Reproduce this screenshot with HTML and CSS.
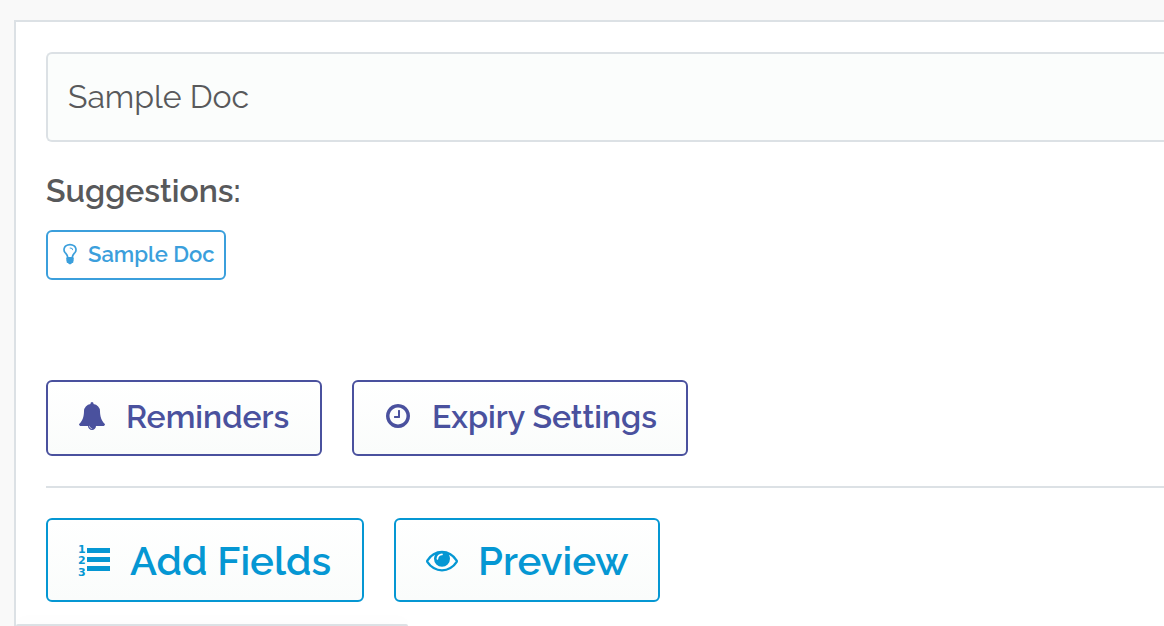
FILE: index.html
```html
<!DOCTYPE html>
<html lang="en">
	<head>
		<meta charset="UTF-8">
		<title>Sample Doc</title>
		<link rel="stylesheet" href="styles.css">
	</head>
	<body>
		<div class="panel">
			<input class="docname" type="text" value="Sample Doc" aria-label="Document name">
			<h2 class="subtitle">Suggestions:</h2>
			<div class="suggestions">
				<button type="button" class="btn btn-tip">
					<svg class="icon" viewBox="0 0 1792 1792" aria-hidden="true"><path d="M1120 576q0 13-9.5 22.5t-22.5 9.5-22.5-9.5-9.5-22.5q0-46-54-71t-106-25q-13 0-22.5-9.5t-9.5-22.5 9.5-22.5 22.5-9.5q50 0 99.500 16t87 54 37.500 90zm160 0q0-72-34.500-134t-90-101.500-123-62-136.500-22.500-136.500 22.500-123 62-90 101.500-34.500 134q0 101 68 180 10 11 30.500 33t30.500 33q128 153 141 298h228q13-145 141-298 10-11 30.500-33t30.500-33q68-79 68-180zm128 0q0 155-103 268-45 49-74.500 87t-59.500 95.500-34 107.500q47 28 47 82 0 37-25 64 25 27 25 64 0 52-45 81 13 23 13 47 0 46-31.500 71t-77.500 25q-20 44-60 70t-87 26-87-26-60-70q-46 0-77.500-25t-31.500-71q0-24 13-47-45-29-45-81 0-37 25-64-25-27-25-64 0-54 47-82-4-50-34-107.500t-59.500-95.500-74.500-87q-103-113-103-268 0-99 44.500-184.500t117-142 164-89 186.500-32.500 186.500 32.500 164 89 117 142 44.500 184.500z"/></svg>
					<span>Sample Doc</span>
				</button>
			</div>
			<div class="row">
				<button type="button" class="btn btn-option reminders">
					<svg class="icon" viewBox="0 0 1792 1792" aria-hidden="true"><path d="M912 1696q0-16-16-16-59 0-101.500-42.500t-42.500-101.500q0-16-16-16t-16 16q0 73 51.500 124.500t124.500 51.500q16 0 16-16zm816-288q0 52-38 90t-90 38h-448q0 106-75 181t-181 75-181-75-75-181h-448q-52 0-90-38t-38-90q50-42 91-88t85-119.500 74.500-158.500 50-206 19.500-260q0-152 117-282.500t307-158.500q-8-19-8-39 0-40 28-68t68-28 68 28 28 68q0 20-8 39 190 28 307 158.500t117 282.500q0 139 19.500 260t50 206 74.500 158.500 85 119.500 91 88z"/></svg>
					<span>Reminders</span>
				</button>
				<button type="button" class="btn btn-option expiry">
					<svg class="icon" viewBox="0 0 1792 1792" aria-hidden="true"><path d="M1024 544v448q0 14-9 23t-23 9h-320q-14 0-23-9t-9-23v-64q0-14 9-23t23-9h224v-352q0-14 9-23t23-9h64q14 0 23 9t9 23zm416 352q0-148-73-273t-198-198-273-73-273 73-198 198-73 273 73 273 198 198 273 73 273-73 198-198 73-273zm224 0q0 209-103 385.500t-279.500 279.500-385.500 103-385.500-103-279.500-279.500-103-385.500 103-385.500 279.500-279.500 385.500-103 385.500 103 279.500 279.500 103 385.500z"/></svg>
					<span>Expiry Settings</span>
				</button>
			</div>
			<hr class="line">
			<div class="row">
				<button type="button" class="btn btn-action fields">
					<svg class="icon" viewBox="0 0 32 32" aria-hidden="true">
						<g class="digits"><text x="0" y="9">1</text><text x="0" y="20">2</text><text x="0" y="32">3</text></g>
						<path d="M9 4h23v5H9zM9 13h23v5H9zM9 22h23v5H9z"/>
					</svg>
					<span>Add Fields</span>
				</button>
				<button type="button" class="btn btn-action preview">
					<svg class="icon" viewBox="0 0 1792 1792" aria-hidden="true"><path d="M1664 960q-152-236-381-353 61 104 61 225 0 185-131.500 316.500t-316.500 131.500-316.500-131.500-131.500-316.500q0-121 61-225-229 117-381 353 133 205 333.500 326.500t434.500 121.500 434.500-121.500 333.500-326.500zm-720-384q0-20-14-34t-34-14q-125 0-214.500 89.500t-89.500 214.500q0 20 14 34t34 14 34-14 14-34q0-86 61-147t147-61q20 0 34-14t14-34zm848 384q0 34-20 69-140 230-376.500 368.500t-499.500 138.500-499.500-139-376.500-368q-20-35-20-69t20-69q140-229 376.500-368t499.500-139 499.500 139 376.500 368q20 35 20 69z"/></svg>
					<span>Preview</span>
				</button>
			</div>
		</div>
		<div class="statusbar"></div>
	</body>
</html>
```
FILE: styles.css
```css
*{
	box-sizing: border-box;
}
body{
	margin: 0;
	padding: 20px 0 0 14px;
	background: #f9f9f9;
	color: #58595b;
	font-family: Raleway, Lato, "Open Sans", sans-serif;
	overflow: hidden;
}
.panel{
	min-height: 100vh;
	padding: 30px 0 30px 30px;
	border: 2px solid #dce1e5;
	border-right: 0;
	background: #fff;
}
.docname{
	display: block;
	width: 100%;
	height: 90px;
	padding: 0 20px 2px;
	border: 2px solid #dce1e5;
	border-right: 0;
	border-radius: 6px 0 0 6px;
	background: #fbfdfc;
	color: #58595b;
	font-family: inherit;
	font-size: 32px;
	font-weight: 400;
}
.subtitle{
	margin: 29px 0 19px;
	font-size: 32px;
	font-weight: 600;
	line-height: 40px;
}
.suggestions{
	margin-bottom: 100px;
}
.row{
	display: flex;
	gap: 30px;
}
.btn{
	display: flex;
	align-items: center;
	gap: 20px;
	padding: 0 30px;
	border: 2px solid currentColor;
	border-radius: 6px;
	background: linear-gradient(#fff, #fafcfb);
	font-family: inherit;
	font-weight: 600;
	white-space: nowrap;
}
.icon{
	flex: none;
	fill: currentColor;
}
.btn-tip{
	gap: 6px;
	min-width: 180px;
	height: 50px;
	padding: 0 10px 2px;
	background: #fff;
	color: #3b9fdc;
	font-size: 22px;
}
.btn-tip .icon{
	width: 24px;
	height: 24px;
}
.btn-option{
	height: 76px;
	padding: 0 28px 4px 30px;
	color: #4a519e;
	font-size: 32px;
}
.btn-option .icon{
	width: 28px;
	height: 28px;
}
.btn-action{
	height: 84px;
	padding-right: 28px;
	color: #0597d3;
	font-size: 40px;
}
.btn-action .icon{
	width: 32px;
	height: 32px;
	overflow: visible;
}
.digits{
	font-family: "DejaVu Sans", sans-serif;
	font-size: 11px;
	font-weight: 700;
}
.reminders{
	min-width: 276px;
}
.expiry{
	min-width: 336px;
}
.fields{
	min-width: 318px;
}
.preview{
	min-width: 266px;
}
.line{
	margin: 30px 0;
	border: 0;
	border-top: 2px solid #dce1e5;
}
/* top edge of the link status bubble */
.statusbar{
	position: fixed;
	left: 16px;
	bottom: 0;
	width: 392px;
	height: 2px;
	border-radius: 4px 4px 0 0;
	background: #dce1e5;
	box-shadow: 0 0 16px rgba(0, 0, 0, 0.08);
}
```
